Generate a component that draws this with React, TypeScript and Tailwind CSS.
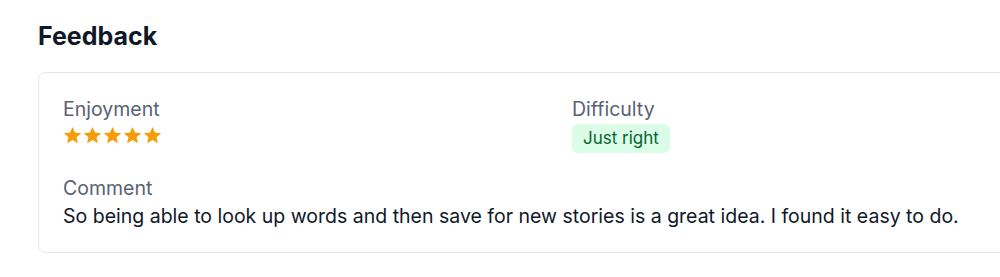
import React from 'react';

const Star = () => (
  <svg viewBox="0 0 24 24" className="w-[19px] h-[19px] fill-[#f59e0b]">
    <path d="M12 1.2l3.2 7.1 7.7.7-5.8 5.2 1.7 7.6L12 17.8l-6.8 4 1.7-7.6L1.1 9l7.7-.7z" />
  </svg>
);

const App: React.FC = () => {
  return (
    <div className="bg-white w-[1000px] h-[277px] overflow-hidden pl-[38px] pt-[20px] font-['Inter',sans-serif]">
      <h2 className="text-[25px] leading-[32px] font-bold text-gray-900">Feedback</h2>
      <div className="mt-[20px] w-[1080px] border border-gray-200 rounded-lg px-6 pt-6 pb-6">
        <div className="grid grid-cols-[509px_1fr]">
          <div>
            <div className="text-[19.5px] leading-6 text-[#596173]">Enjoyment</div>
            <div className="flex items-center mt-[5px] gap-px">
              <Star />
              <Star />
              <Star />
              <Star />
              <Star />
            </div>
          </div>
          <div>
            <div className="text-[19.5px] leading-6 text-[#596173]">Difficulty</div>
            <span className="inline-block mt-[3px] px-[11px] py-[4px] rounded-md bg-green-100 text-green-800 text-[17px] leading-[21px]">
              Just right
            </span>
          </div>
        </div>
        <div className="mt-[23px]">
          <div className="text-[19.5px] leading-6 text-[#596173]">Comment</div>
          <p className="text-[19.5px] leading-6 text-gray-900 mt-[4px]">
            So being able to look up words and then save for new stories is a great idea. I found it easy to do.
          </p>
        </div>
      </div>
    </div>
  );
};

export default App;
